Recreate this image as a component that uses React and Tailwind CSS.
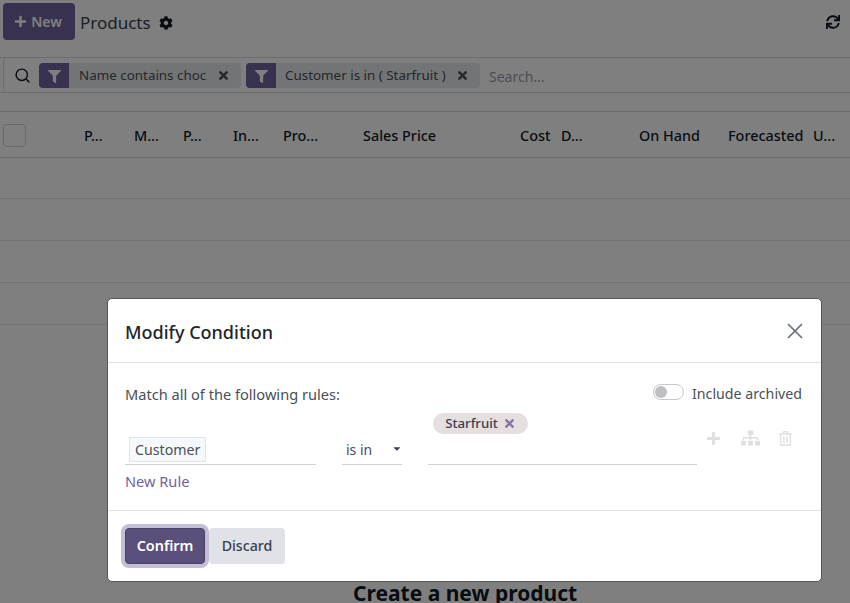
import React from "react";
import { FaPlus, FaCog, FaSync, FaFilter, FaSitemap, FaRegTrashAlt, FaCaretDown, FaTimes } from "react-icons/fa";
import { LuSearch, LuX } from "react-icons/lu";

function Chip({ label, width, labelGap, gap }) {
  return (
    <div className={`flex h-[25px] items-center rounded-[4px] bg-[#e7e9ed] ${width}`}>
      <div className="flex h-full w-[30px] shrink-0 items-center justify-center rounded-l-[4px] bg-[#71639e] text-white">
        <FaFilter className="mt-[2px] h-[13px] w-[13px]" />
      </div>
      <span className={`${labelGap} whitespace-nowrap text-[13.4px] text-[#495057]`}>{label}</span>
      <FaTimes className={`${gap} h-[13px] w-[13px] shrink-0 text-[#495057]`} />
    </div>
  );
}

const cols = [
  ["P...", "w-[50px]"],
  ["M...", "w-[49px]"],
  ["P...", "w-[50px]"],
  ["In...", "w-[50px]"],
  ["Pro...", "w-[80px]"],
  ["Sales Price", "w-[157px]"],
  ["Cost", "w-[41px]"],
  ["D...", "w-[78px]"],
  ["On Hand", "w-[89px]"],
  ["Forecasted", "w-[85px]"],
  ["U...", "w-[30px]"],
];

export default function App() {
  return (
    <div className="relative h-[603px] w-[850px] overflow-hidden bg-white font-['Noto_Sans',sans-serif] text-[14px] text-[#374151]">
      {/* Page */}
      <div className="flex h-[57px] items-start px-[3px] pt-[3px]">
        <button className="flex h-[37px] w-[72px] items-center justify-center gap-[4px] rounded-[4px] bg-[#71639e] pr-[2px] text-[14px] font-semibold text-white">
          <FaPlus className="h-[13px] w-[13px]" />
          New
        </button>
        <div className="ml-[5px] flex h-[40px] items-center text-[17px] text-[#374151]">Products</div>
        <FaCog className="ml-[8px] mt-[13px] h-[14px] w-[14px] text-[#111827]" />
        <FaSync className="ml-auto mr-[7px] mt-[12px] h-[14px] w-[14px] text-[#111827]" />
      </div>

      <div className="flex h-[36px] items-center border-y border-[#d8dadd] pl-[3px]">
        <div className="flex h-[34px] w-[847px] items-center rounded-l-[4px] border-l border-[#d8dadd]">
          <LuSearch className="ml-[10px] h-[17px] w-[17px] text-[#111827]" strokeWidth={2} />
          <div className="ml-[8px]">
            <Chip label="Name contains choc" width="w-[202px]" labelGap="ml-[10px]" gap="ml-[11px]" />
          </div>
          <div className="ml-[5px]">
            <Chip label="Customer is in ( Starfruit )" width="w-[234px]" labelGap="ml-[9px]" gap="ml-[10px]" />
          </div>
          <span className="ml-[9px] mt-[2px] text-[14px] text-[#9a9da3]">Search...</span>
        </div>
      </div>

      <div className="mt-[18px] flex h-[47px] items-center border-y border-[#d8dadd] pt-[2px] text-[14.4px] font-medium text-[#111827]">
        <div className="ml-[3px] h-[23px] w-[23px] rounded-[4px] border border-[#d0d2d6]" />
        <div className="ml-[58px] flex">
          {cols.map(([c, w], i) => (
            <div key={i} className={`${w} whitespace-nowrap`}>{c}</div>
          ))}
        </div>
      </div>

      <div className="h-[41px] border-b border-[#e5e7eb]" />
      {[0, 1, 2].map((i) => (
        <div key={i} className="h-[42px] border-b border-[#e5e7eb]" />
      ))}

      <div className="ml-[353px] mt-[253px] whitespace-nowrap text-[21px] font-bold text-[#111827]">Create a new product</div>

      {/* Backdrop + dialog */}
      <div className="absolute inset-0 flex items-start justify-start bg-black/50 pl-[107px] pt-[298px]">
        <div className="h-[284px] w-[715px] rounded-[5px] border border-[#555555] bg-white text-[#495057]">
          <div className="flex h-[64px] items-center justify-between border-b border-[#dee2e6] pl-[17px] pr-[13px]">
            <h2 className="mt-[3px] text-[18px] font-medium text-[#212529]">Modify Condition</h2>
            <LuX className="h-[26px] w-[26px] text-[#6b7076]" strokeWidth={1.6} />
          </div>

          <div className="h-[148px] border-b border-[#dee2e6] pl-[17px] pr-[19px]">
            <div className="flex h-[62px] items-center justify-between pt-[2px]">
              <span className="text-[14.6px]">Match all of the following rules:</span>
              <div className="mb-[3px] flex items-center">
                <div className="mb-[2px] flex h-[16px] w-[31px] items-center rounded-full border border-[#c6c8cc] pl-[1px]">
                  <div className="h-[12px] w-[12px] rounded-full bg-[#bdbfc3]" />
                </div>
                <span className="ml-[8px] text-[14.2px]">Include archived</span>
              </div>
            </div>
            <div className="mt-[-12px] flex h-[52px] items-start">
              <div className="flex h-[52px] w-[191px] items-end border-b border-[#ced1d4] pb-[2px] pl-[4px]">
                <span className="flex h-[25px] items-center border border-[#dbe6ef] bg-[#f6f9fb] px-[5px] text-[14.2px] text-[#495057]">Customer</span>
              </div>
              <div className="ml-[26px] flex h-[52px] w-[60px] items-end border-b border-[#ced1d4] pb-[2px] pl-[4px]">
                <span className="h-[25px] whitespace-nowrap text-[14px] leading-[25px]">is in</span>
                <FaCaretDown className="mb-[8px] ml-[20px] h-[11px] w-[11px] text-[#374151]" />
              </div>
              <div className="ml-[26px] h-[52px] w-[269px] border-b border-[#ced1d4] pl-[5px]">
                <div className="flex h-[21px] w-[95px] items-center justify-center gap-[5px] rounded-full bg-[#e6dfdf] text-[13.2px] font-medium text-[#374151]">
                  Starfruit
                  <FaTimes className="h-[13px] w-[13px] text-[#8379a8]" />
                </div>
              </div>
              <div className="ml-[9px] flex items-center pt-[17px] text-[#dfdfdf]">
                <FaPlus className="h-[15px] w-[15px]" />
                <FaSitemap className="ml-[20px] h-[16px] w-[19px]" />
                <FaRegTrashAlt className="ml-[19px] h-[15px] w-[13px]" />
              </div>
            </div>
            <div className="mt-[6px] text-[14.6px] text-[#71639e]">New Rule</div>
          </div>

          <div className="flex h-[70px] items-center pl-[17px]">
            <button className="h-[36px] w-[80px] rounded-[4px] border border-[#4b4068] bg-[#5b4f7c] text-[14.4px] font-semibold text-white shadow-[0_0_0_4px_#c5bfd6]">
              Confirm
            </button>
            <button className="ml-[4px] h-[36px] w-[76px] rounded-[4px] bg-[#e0e2e7] text-[14.2px] font-medium text-[#374151]">
              Discard
            </button>
          </div>
        </div>
      </div>
    </div>
  );
}
